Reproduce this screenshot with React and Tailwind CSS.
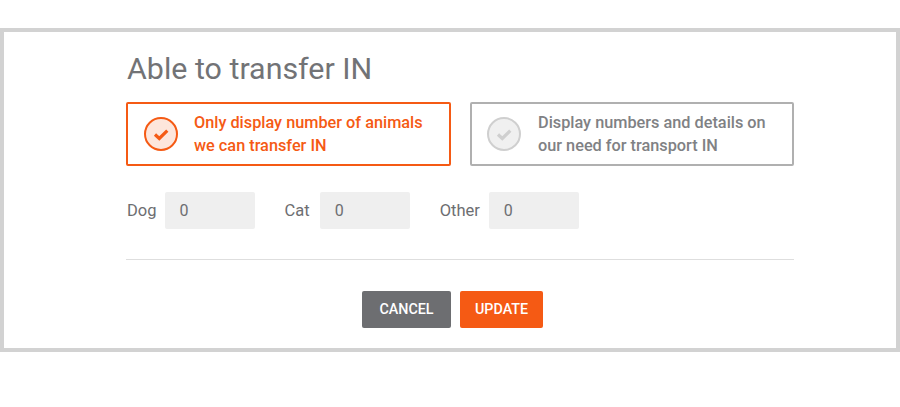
function Check({ color, fill }) {
  return (
    <svg width="36" height="36" viewBox="0 0 36 36" className="shrink-0">
      <circle cx="18" cy="18" r="16" fill={fill} stroke={color} strokeWidth="2" />
      <path d="M12 18.5l4.3 4 8-7.8" fill="none" stroke={color} strokeWidth="3.2" />
    </svg>
  )
}

function Option({ active, children }) {
  return (
    <div className={active
      ? "w-[325px] h-16 flex items-center gap-[15px] pl-[15px] border-2 border-[#f55a14] rounded-[2px] text-[#f55a14]"
      : "w-[324px] h-16 flex items-center gap-[16px] pl-[14px] border-2 border-[#b0b0b0] rounded-[2px] text-[#808184]"}>
      <Check color={active ? "#f55a14" : "#cfcfcf"} fill={active ? "#fde6dc" : "#f0f0f0"} />
      <p className="text-[16.3px] leading-[23px] font-medium">{children}</p>
    </div>
  )
}

function Count({ label, className, inputClass }) {
  return (
    <div className={"flex items-center " + className}>
      <span className="text-[16.5px] text-[#6d6e71] pt-px">{label}</span>
      <div className={"w-[90px] h-[37px] pl-[15px] flex items-center bg-[#efefef] rounded-[2px] text-[16px] text-[#6d6e71] " + inputClass}>0</div>
    </div>
  )
}

export default function App() {
  return (
    <div className="w-[900px] h-[407px] bg-white font-['Roboto',sans-serif] pt-[28px]">
      <div className="h-[324px] border-4 border-[#d2d2d2] pl-[122px] pr-[102px] pt-[16px]">
        <h1 className="text-[30.4px] leading-[42px] text-[#727376] mb-[12px] ml-px">Able to transfer IN</h1>
        <div className="flex gap-[19px]">
          <Option active>Only display number of animals<br />we can transfer IN</Option>
          <Option>Display numbers and details on<br />our need for transport IN</Option>
        </div>
        <div className="flex mt-[26px] pl-px">
          <Count label="Dog" inputClass="ml-[8px]" />
          <Count label="Cat" className="ml-[30px]" inputClass="ml-[10px]" />
          <Count label="Other" className="ml-[30px]" inputClass="ml-[9px]" />
        </div>
        <div className="w-[668px] h-px bg-[#dedede] mt-[30px]" />
        <div className="flex justify-center gap-[9px] mt-[31px] w-[668px] pr-[15px]">
          <button className="w-[89px] h-[37px] bg-[#6d6e71] text-white text-[14.3px] font-medium rounded-[2px]">CANCEL</button>
          <button className="w-[83px] h-[37px] bg-[#f55a14] text-white text-[14.3px] font-medium rounded-[2px]">UPDATE</button>
        </div>
      </div>
    </div>
  )
}
